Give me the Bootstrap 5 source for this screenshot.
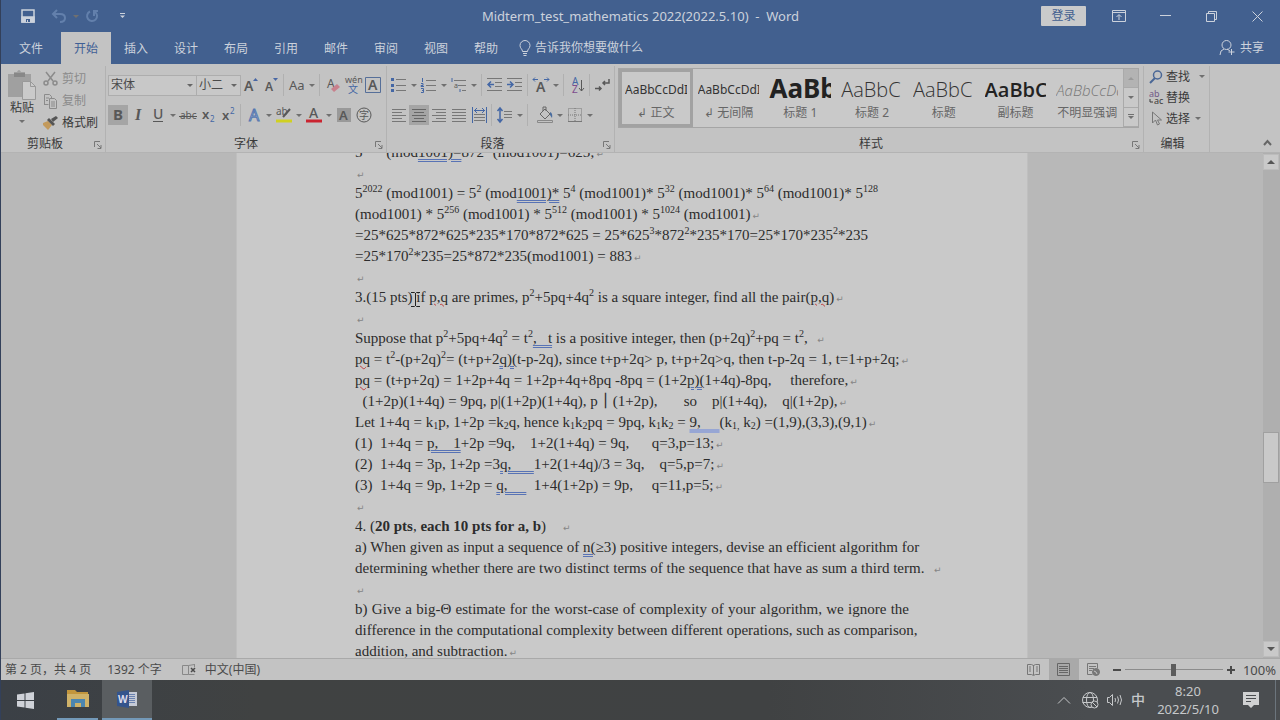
<!DOCTYPE html>
<html lang="zh-CN">
<head>
<meta charset="utf-8">
<meta name="viewport" content="width=device-width, initial-scale=1">
<title>Midterm_test_mathematics 2022(2022.5.10) - Word</title>
<link href="https://cdn.jsdelivr.net/npm/bootstrap@5.3.0/dist/css/bootstrap.min.css" rel="stylesheet">
<script src="https://cdn.jsdelivr.net/npm/bootstrap@5.3.0/dist/js/bootstrap.bundle.min.js"></script>
<style>
:root{--blue:#42608f;--ribbon:#c3c3c3;--ink:#3a3a3a;--line:#adadad}
body{font:12px/16px "Noto Sans","Noto Sans CJK SC",sans-serif;color:var(--ink);background:var(--ribbon);overflow:hidden}
svg{display:block;flex:none;fill:none;overflow:visible}
svg:not([stroke]){stroke:currentColor}
svg text{fill:currentColor;stroke:none}
button{border:0;background:none;color:inherit;padding:0;font:inherit;flex:none}
.app{border-left:1px solid #33405a}
/* title and tabs */
.titlebar{background:var(--blue);color:#ccd2dc;height:32px}
.doc-title{font-size:13px}
.qat{padding-left:20px}
.faded{color:#6380ac}
.winbtn{width:46px;height:32px;display:grid;place-items:center}
.login{background:#c9cacb;color:#42608f;width:45px;height:20px;border-radius:1px;margin-right:10px}
.tabs{background:var(--blue);color:#ccd2dc;height:32px}
.tabs a{color:inherit;text-decoration:none;width:50px;line-height:33px;height:32px;text-align:center;flex:none}
.tabs a.file-tab{width:60px}
.tabs a.current{background:var(--ribbon);color:#3f5f95}
/* ribbon */
.ribbon{height:89px;border-bottom:1px solid #b3b3b3;background:var(--ribbon)}
.group{border-right:1px solid #b2b2b2;height:86px;margin-top:2px;flex:none;display:flex;flex-direction:column;position:relative}
.g-clip{width:105px}.g-font{width:281px}.g-para{width:228px}.g-edit{width:66px}
.g-style{flex:1 1 0;min-width:0}
.group-name{margin-top:auto;text-align:center;line-height:16px}
.launch{position:absolute;right:3px;bottom:3px}
.tools{padding:4px 0 0 2px;height:34px;display:flex;align-items:center}
.tools + .tools{padding-top:0;height:30px}
.ib{width:20px;height:20px;display:grid;place-items:center;color:#585858}
.ib.on{background:#a5a5a5}
.ar{width:10px;height:20px;display:grid;place-items:center}
.ar::before,.arrow::before{content:"";display:block;border:3px solid transparent;border-top-color:#707070;border-bottom:0}
.vs{width:1px;height:22px;background:#b0b0b0;margin:0 3px 0 2px;flex:none}
.combo{height:21px;border:1px solid #adadad;border-radius:0;padding:0 2px;font:12px/18px "Noto Sans","Noto Sans CJK SC",sans-serif;color:#4a4a4a;background:#c8c8c8 url("data:image/svg+xml,%3Csvg xmlns='http://www.w3.org/2000/svg' width='6' height='3'%3E%3Cpath d='M0 0h6L3 3z' fill='%23666'/%3E%3C/svg%3E") no-repeat right 3px center;appearance:none}
.combo.face{width:89px}.combo.size{width:45px;margin-left:-1px}
.dim{color:#8b8b8b}
.paste{width:42px;padding-top:4px;display:flex;flex-direction:column;align-items:center}
.clip-list{padding-top:2px}
.clip-list button{display:flex;align-items:center;gap:4px;height:22px}
.gallery{border:1px solid #a5a5a5;background:#c9c9c9;height:60px;margin:2px 4px 0 3px;display:flex;overflow:hidden}
.stylecard{flex:1 1 0;min-width:0;padding:0 5px;text-align:center;color:#666;display:flex;flex-direction:column;white-space:nowrap}
.stylecard.on{border:3px solid #a2a2a2;padding:0 3px}
.stylecard.on .sample{height:33px;padding-top:2px}
.sample{display:flex;align-items:center;height:36px;overflow:hidden;color:#333;padding-top:6px}
.nm{line-height:16px}
.s-sm{font-size:12px}.s-lg{font-size:20px;padding-top:5px;font-weight:300;font-family:"Open Sans","Noto Sans",sans-serif}
.s-h1{font-size:26px;font-weight:700;padding-top:2px;color:#222}
.s-sub{font-weight:600;color:#222}
.s-it{font-size:15px;font-style:italic;color:#777}
.gal-nav{width:15px;flex:none;display:flex;flex-direction:column}
.gal-nav button{flex:1;border-left:1px solid #aaa;border-bottom:1px solid #aaa;display:grid;place-items:center;color:#707070}
.gal-nav button:first-child{background:#b3b3b3}
.edit-list{padding-left:5px}
.edit-list button{display:flex;align-items:center;height:21px;gap:3px}
.fold{width:70px;color:#666}
/* document */
.canvas{background:#b8b8b8;min-height:0;overflow:hidden}
.page{width:792px;background:#c9c9c9;border:solid #bfbfbf;border-width:0 1px;padding:0 118px;margin-top:-11px;min-height:540px;font:15px/21px "Liberation Serif",serif;color:#2c2c2c}
.page p{margin:0;height:21px;white-space:pre}
.page p.blank{height:20px}
.page p.full{white-space:nowrap;text-align:justify;text-align-last:justify}
.page sup,.page sub{font-size:10px;line-height:0;vertical-align:baseline;position:relative}
.page sup{top:-6px}
.page sub{bottom:-2px}
.pm::after{content:"↵";font:9px/9px "DejaVu Sans",sans-serif;color:#858585;margin-left:2px}
.gr{text-decoration:underline double #5873b5 1px;text-underline-offset:2px}
.gr.solid{text-decoration:underline solid #97a6d4 4px}
.sp{text-decoration:underline wavy #c04040 1px;text-underline-offset:1px}
.caret-pos{position:relative}
.caret-pos svg{position:absolute;left:-3px;top:2px}
.scroll{width:17px;background:#afafaf;flex:none;padding:1px 1px 1px 0}
.scroll button{width:16px;height:16px;background:#c9c9c9;border:1px solid #bcbcbc;display:grid;place-items:center}
.thumb{background:#c9c9c9;border:1px solid #a0a0a0;height:51px;flex:none}
.before{flex:262}.after{flex:158}
/* status and task bars */
.status{height:22px;border-top:1px solid #a9a9a9;background:#c3c3c3;color:#4a4a4a}
.vw{width:30px;height:21px;display:grid;place-items:center}
.vw.on{background:#a9a9a9}
.zoomer{width:98px;height:12px;appearance:none;background:linear-gradient(#8c8c8c,#8c8c8c) center/100% 1px no-repeat;margin:0 4px}
.zoomer::-webkit-slider-thumb{appearance:none;width:5px;height:12px;background:#5c5c5c}
.zoomer::-moz-range-thumb{width:5px;height:12px;border:0;border-radius:0;background:#5c5c5c}
.percent{font-size:13px}
.taskbar{height:40px;background:linear-gradient(90deg,#3b4046 0,#404242 20%,#404243 60%,#4a4d50 85%);color:#c6c8ca}
.tb{height:40px;display:grid;place-items:center}
.tb.home{width:48px}.tb.files{width:41px}.tb.word{width:50px}
.tb.run{border-bottom:2px solid #7399b8}
.tb.word{background:#5a5e61}
.ime{font-size:14px;font-weight:500}
.clock{width:78px;font-size:13px;line-height:18px;text-align:center}
.edge{height:40px}
</style>
</head>
<body>
<div class="app d-flex flex-column vh-100">
<header>
 <div class="titlebar d-flex align-items-center">
  <div class="qat d-flex align-items-center flex-fill w-25">
   <button aria-label="保存"><svg width="14" height="14" stroke-width="1.5"><path d="M1 1h12v12H1z"/><path d="M1 8h12v5H1z" fill="currentColor"/><path d="M5 10h4v3H5z" fill="#42608f" stroke="none"/><path d="M6 11h1v2H6z" fill="currentColor" stroke="none"/></svg></button>
   <button class="faded ms-3" aria-label="撤消"><svg width="16" height="14" stroke-width="2"><path d="M6 1 2 5l4 4M2 5h7q5 0 5 4t-5 4"/></svg></button>
   <span class="ar faded ms-1"></span>
   <button class="faded ms-1" aria-label="重复"><svg width="14" height="14" stroke-width="2"><path d="M5 2.500A5 5 0 1 0 10 3M9 7V2h4"/></svg></button>
   <button class="ms-3 ps-1" aria-label="自定义"><svg width="7" height="8"><path d="M1 1.500h5"/><path d="M1 3.500h5L3.500 6z" fill="currentColor" stroke="none"/></svg></button>
  </div>
  <div class="doc-title text-nowrap">Midterm_test_mathematics 2022(2022.5.10)&nbsp; -&nbsp; Word</div>
  <div class="d-flex align-items-center justify-content-end flex-fill w-25">
   <button class="login">登录</button>
   <button class="winbtn" aria-label="功能区显示选项"><svg width="14" height="12"><path d="M.5.500h13v11H.5zM.5 2.500h13M7 10V5M4.500 7 7 4.500 9.500 7"/></svg></button>
   <button class="winbtn" aria-label="最小化"><svg width="11" height="2"><path d="M0 .5h11"/></svg></button>
   <button class="winbtn" aria-label="还原"><svg width="11" height="11"><path d="M.5 2.500h8v8h-8zM2.500 2V.500h8v8H9"/></svg></button>
   <button class="winbtn" aria-label="关闭"><svg width="11" height="11"><path d="M.5.500l10 10M10.500.500l-10 10"/></svg></button>
  </div>
 </div>
 <nav class="tabs d-flex">
  <a href="#" class="file-tab">文件</a><a href="#" class="current">开始</a><a href="#">插入</a><a href="#">设计</a><a href="#">布局</a><a href="#">引用</a><a href="#">邮件</a><a href="#">审阅</a><a href="#">视图</a><a href="#">帮助</a>
  <button class="d-flex align-items-center gap-1 ms-2"><svg width="12" height="16"><path d="M3.500 11.500C3.500 9 1 8.500 1 5.500a5 5 0 0 1 10 0C11 8.500 8.500 9 8.500 11.500zM4 13.500h4M4.500 15.500h3"/></svg>告诉我你想要做什么</button>
  <button class="d-flex align-items-center gap-1 ms-auto me-3"><svg width="17" height="16"><circle cx="7.500" cy="5" r="4.500"/><path d="M1 15q0-5 4-6M8 9l3 2M12.500 9v6M9.500 12h6"/></svg>共享</button>
 </nav>
</header>

<section class="ribbon d-flex flex-shrink-0">
 <div class="group g-clip">
  <div class="d-flex">
   <button class="paste"><svg width="28" height="30" stroke="none"><path d="M0 4h6V2h3q2-4 4 0h4v2h6v8h-7v15H0z" fill="#a0a0a0"/><path d="M6 3h11v4H6z" fill="#888"/><path d="M14.500 11.500h8l5 5v13h-13z" fill="#cacaca" stroke="#999"/><path d="M22.500 11.500v5h5" stroke="#999"/></svg><span>粘贴</span><span class="arrow mt-1"></span></button>
   <div class="clip-list">
    <button class="dim"><svg width="15" height="14" stroke-width="1.500"><path d="M3 0l7 9M12 0L5 9"/><circle cx="3" cy="11" r="2"/><circle cx="12" cy="11" r="2"/></svg>剪切</button>
    <button class="dim"><svg width="15" height="15"><path d="M1.500 11V.500h5l2 2V4M6.500 4.500h5l2 2v8h-7zM1.500 10.500h4M3 4h3M3 6.500h2M8 8h4M8 10h4M8 12h4"/></svg>复制</button>
    <button><svg width="15" height="14" stroke="none"><path d="M0 7l5-2 4 4-4 5-5-5z" fill="#c39a5c"/><path d="M4 4l2-2 6 6-2 2z" fill="#555"/><path d="M8 3l5-3 2 2-5 4z" fill="#555"/></svg>格式刷</button>
   </div>
  </div>
  <div class="group-name me-3">剪贴板</div><svg class="launch" width="8" height="8" stroke="#777"><use href="#la"/></svg>
 </div>

 <div class="group g-font">
  <div class="tools">
   <select class="combo face" aria-label="字体"><option>宋体</option></select><select class="combo size" aria-label="字号"><option>小二</option></select>
   <button class="ib" aria-label="增大字号"><svg width="18" height="18"><text x="2" y="15" font-size="14" font-weight="600">A</text><path d="M11 5l2.500-3L16 5z" fill="#4867a5" stroke="none"/></svg></button>
   <button class="ib" aria-label="减小字号"><svg width="18" height="18"><text x="3" y="15" font-size="12" font-weight="600">A</text><path d="M11 2l2.500 3L16 2z" fill="#4867a5" stroke="none"/></svg></button>
   <span class="vs"></span><button class="ib" aria-label="更改大小写"><svg width="18" height="18"><text x="1" y="14" font-size="13">Aa</text></svg></button><span class="ar"></span><span class="vs"></span>
   <button class="ib" aria-label="清除格式"><svg width="18" height="18"><text x="3" y="12" font-size="12">A</text><path d="M7 13l6-5 3 3-6 5z" fill="#c8818d" stroke="none"/></svg></button>
   <button class="ib" aria-label="拼音指南"><svg width="18" height="20"><text x="1" y="8" font-size="9">wén</text><text x="4" y="18" font-size="10" style="fill:#4467a5">文</text></svg></button>
   <button class="ib" aria-label="字符边框"><svg width="17" height="17"><path d="M.5.500h15v15H.5z" stroke="#566f99"/><text x="3" y="13" font-size="14" font-weight="600">A</text></svg></button>
  </div>
  <div class="tools">
   <button class="ib on" aria-label="加粗"><svg width="18" height="18"><text x="4" y="14" font-size="15" font-weight="700">B</text></svg></button>
   <button class="ib" aria-label="倾斜"><svg width="18" height="18"><text x="6" y="14" font-size="16" font-style="italic" font-weight="600" font-family="Liberation Serif">I</text></svg></button>
   <button class="ib" aria-label="下划线"><svg width="18" height="18"><text x="4" y="13" font-size="14" font-weight="500">U</text><path d="M4 15.500h10"/></svg></button><span class="ar"></span>
   <button class="ib" aria-label="删除线"><svg width="18" height="18"><text x="1" y="13" font-size="10">abc</text><path d="M0 10.500h18"/></svg></button>
   <button class="ib" aria-label="下标"><svg width="18" height="18"><text x="3" y="13" font-size="13" font-weight="600">x</text><text x="11" y="16" font-size="8" style="fill:#4467a5">2</text></svg></button>
   <button class="ib" aria-label="上标"><svg width="18" height="18"><text x="3" y="14" font-size="13" font-weight="600">x</text><text x="11" y="8" font-size="8" style="fill:#4467a5">2</text></svg></button>
   <span class="vs"></span>
   <button class="ib" aria-label="文本效果"><svg width="18" height="18"><text x="4" y="15" font-size="16" style="stroke:#5577b0;fill:#c3cfe0">A</text></svg></button><span class="ar"></span>
   <button class="ib" aria-label="突出显示"><svg width="18" height="18"><text x="1" y="9" font-size="10">ab</text><path d="M8 11l7-8" stroke-width="2"/><path d="M1 13.500h16v3H1z" fill="#d0d022" stroke="none"/></svg></button><span class="ar"></span>
   <button class="ib" aria-label="字体颜色"><svg width="18" height="18"><text x="4" y="12" font-size="14" font-weight="500">A</text><path d="M1 13.500h16v3H1z" fill="#ca2430" stroke="none"/></svg></button><span class="ar"></span>
   <button class="ib" aria-label="字符底纹"><svg width="16" height="16"><path d="M1 1h14v14H1z" fill="#999" stroke="none"/><text x="3" y="13" font-size="13" font-weight="600">A</text></svg></button>
   <button class="ib" aria-label="带圈字符"><svg width="16" height="16"><circle cx="8" cy="8" r="7"/><text x="3" y="12" font-size="10">字</text></svg></button>
  </div>
  <div class="group-name">字体</div><svg class="launch" width="8" height="8" stroke="#777"><use href="#la"/></svg>
 </div>

 <div class="group g-para">
  <div class="tools">
   <button class="ib" aria-label="项目符号"><svg width="16" height="14"><path d="M5 1.500h10M5 7.500h10M5 12.500h10" stroke="#777"/><path d="M0 0h3v3H0zM0 6h3v3H0zM0 11h3v3H0z" fill="#4467a5" stroke="none"/></svg></button><span class="ar"></span>
   <button class="ib" aria-label="编号"><svg width="16" height="16"><path d="M5 3.500h10M5 8.500h10M5 13.500h10" stroke="#777"/><path d="M1.500 1v4M0 6.500h2v2H0v1h3M0 11.500h2.500v4H0M1 13.500h1" stroke="#4467a5"/></svg></button><span class="ar"></span>
   <button class="ib" aria-label="多级列表"><svg width="16" height="16"><path d="M3 3.500h12M7 8.500h8M11 13.500h4" stroke="#777"/><path d="M1 1v4M9 12v3" stroke="#4467a5"/><text x="3" y="11" font-size="7">a</text></svg></button><span class="ar"></span><span class="vs"></span>
   <button class="ib" aria-label="减少缩进"><svg width="16" height="14"><path d="M0 .5h15M8 4.500h7M8 8.500h7M0 12.500h15" stroke="#777"/><path d="M7 6.500H1M4 3.500l-3 3 3 3" stroke="#4467a5" stroke-width="1.500"/></svg></button>
   <button class="ib" aria-label="增加缩进"><svg width="16" height="14"><path d="M0 .5h15M8 4.500h7M8 8.500h7M0 12.500h15" stroke="#777"/><path d="M0 6.500h6M3 3.500l3 3-3 3" stroke="#4467a5" stroke-width="1.500"/></svg></button><span class="vs"></span>
   <button class="ib" aria-label="中文版式"><svg width="18" height="18"><text x="4" y="16" font-size="14" font-weight="600">A</text><path d="M6 3.500H1m2-2-2 2 2 2M12 3.500h5m-2-2 2 2-2 2" stroke="#4467a5"/></svg></button><span class="ar"></span><span class="vs"></span>
   <button class="ib" aria-label="排序"><svg width="16" height="18"><text x="3" y="9" font-size="10" style="fill:#4467a5">A</text><text x="3" y="17" font-size="10" style="fill:#7d4b8d">Z</text><path d="M12.500 4v11m-2.500-3 2.500 3 2.500-3"/></svg></button><span class="vs"></span>
   <button class="ib" aria-label="显示编辑标记"><svg width="16" height="14"><path d="M14 1v4H8m2-2-2 2 2 2M0 10.500h6m-2-2 2 2-2 2" stroke-width="1.500"/></svg></button>
  </div>
  <div class="tools">
   <button class="ib" aria-label="左对齐"><svg width="14" height="15" stroke="#777"><path d="M0 1.500h14M0 4.500h10M0 7.500h14M0 10.500h10M0 13.500h14"/></svg></button>
   <button class="ib on" aria-label="居中"><svg width="14" height="15" stroke="#666"><path d="M0 1.500h14M2 4.500h10M0 7.500h14M2 10.500h10M0 13.500h14"/></svg></button>
   <button class="ib" aria-label="右对齐"><svg width="14" height="15" stroke="#777"><path d="M0 1.500h14M4 4.500h10M0 7.500h14M4 10.500h10M0 13.500h14"/></svg></button>
   <button class="ib" aria-label="两端对齐"><svg width="14" height="15" stroke="#777"><path d="M0 1.500h14M0 4.500h14M0 7.500h14M0 10.500h14M0 13.500h14"/></svg></button>
   <button class="ib" aria-label="分散对齐"><svg width="15" height="16" stroke="#777"><path d="M2 7.500h11M2 10.500h11M2 13.500h11"/><path d="M.5 0v16M14.500 0v16M2 3.500h11M5 1 2.500 3.500 5 6M10 1l2.500 2.500L10 6" stroke="#4467a5"/></svg></button><span class="vs"></span>
   <button class="ib" aria-label="行距"><svg width="16" height="16"><path d="M7 4.500h8M7 7.500h8M7 10.500h8" stroke="#777"/><path d="M3 1v14M.5 4 3 1l2.500 3M.5 12 3 15l2.500-3" stroke="#4467a5" stroke-width="1.500"/></svg></button><span class="ar"></span><span class="vs"></span>
   <button class="ib ms-1" aria-label="底纹"><svg width="18" height="18"><path d="M4 8l5-5 5 5-5 5zM7 5V1h3v4" stroke="#666"/><path d="M14 6q3 1 2 6l-2-3z" fill="#4a6d9f" stroke="none"/><path d="M1.500 14.500h15v2h-15z" stroke="#888"/></svg></button><span class="ar"></span>
   <button class="ib" aria-label="边框"><svg width="15" height="15" stroke="#777"><path d="M.5.500h13v13H.5zM7 0v14M0 7h14" stroke-dasharray="1 1"/><path d="M0 13.500h14"/></svg></button><span class="ar"></span>
  </div>
  <div class="group-name pe-3">段落</div><svg class="launch" width="8" height="8" stroke="#777"><use href="#la"/></svg>
 </div>

 <div class="group g-style">
  <div class="gallery">
   <button class="stylecard on"><span class="sample s-sm">AaBbCcDdI</span><span class="nm">↲ 正文</span></button>
   <button class="stylecard"><span class="sample s-sm">AaBbCcDdI</span><span class="nm">↲ 无间隔</span></button>
   <button class="stylecard"><span class="sample s-h1">AaBb</span><span class="nm">标题 1</span></button>
   <button class="stylecard"><span class="sample s-lg">AaBbC</span><span class="nm">标题 2</span></button>
   <button class="stylecard"><span class="sample s-lg">AaBbC</span><span class="nm">标题</span></button>
   <button class="stylecard"><span class="sample s-lg s-sub">AaBbC</span><span class="nm">副标题</span></button>
   <button class="stylecard"><span class="sample s-lg s-it">AaBbCcDd</span><span class="nm">不明显强调</span></button>
   <div class="gal-nav"><button aria-label="上一行"><svg width="6" height="3"><path d="M0 3h6L3 0z" fill="#999" stroke="none"/></svg></button><button aria-label="下一行"><span class="arrow"></span></button><button aria-label="其他"><svg width="6" height="7"><path d="M0 1.500h6"/><path d="M0 3h6L3 6z" fill="currentColor" stroke="none"/></svg></button></div>
  </div>
  <div class="group-name pe-3">样式</div><svg class="launch" width="8" height="8" stroke="#777"><use href="#la"/></svg>
 </div>

 <div class="group g-edit">
  <div class="edit-list">
   <button><svg width="14" height="14" stroke="#4a6796" stroke-width="1.500"><circle cx="8.500" cy="5" r="4"/><path d="M6 8l-5 5" stroke-width="2"/></svg>查找<span class="ar ms-1"></span></button>
   <button><svg width="14" height="15"><text x="0" y="7" font-size="9" style="fill:#725a88">ab</text><text x="5" y="14" font-size="9">ac</text><path d="M1 9v3h3"/></svg>替换</button>
   <button><svg width="14" height="15"><path d="M3.500 1v11l3-3 2 5 2-1-2-4h4z" stroke="#777"/></svg>选择<span class="ar"></span></button>
  </div>
  <div class="group-name pe-2">编辑</div>
 </div>
 <div class="fold d-flex align-items-end justify-content-end flex-shrink-0 pe-2 pb-1"><button aria-label="折叠功能区"><svg width="9" height="9" stroke-width="2"><path d="M1 6l3.500-4L8 6"/></svg></button></div>
</section>

<main class="canvas d-flex flex-fill">
 <div class="flex-fill d-flex justify-content-center overflow-hidden">
 <article class="page flex-shrink-0">
<p>5<sup>1024</sup> (mod<span class="gr">1001)=</span>872<sup>2</sup> (mod1001)=625;<span class="pm"></span></p>
<p class="blank"><span class="pm"></span></p>
<p>5<sup>2022</sup> (mod1001) = 5<sup>2</sup> (mod<span class="gr">1001)*</span> 5<sup>4</sup> (mod1001)* 5<sup>32</sup> (mod1001)* 5<sup>64</sup> (mod1001)* 5<sup>128</sup></p>
<p>(mod1001) * 5<sup>256</sup> (mod1001) * 5<sup>512</sup> (mod1001) * 5<sup>1024</sup> (mod1001)<span class="pm"></span></p>
<p>=25*625*872*625*235*170*872*625 = 25*625<sup>3</sup>*872<sup>2</sup>*235*170=25*170*235<sup>2</sup>*235</p>
<p>=25*170<sup>2</sup>*235=25*872*235(mod1001) = 883<span class="pm"></span></p>
<p class="blank"><span class="pm"></span></p>
<p>3.(15 pts)<span class="caret-pos"><svg width="12" height="17" stroke="#222"><path d="M1 1.500h3.500l1 1 1-1H10M5.500 2v13M1 15.500h3.500l1-1 1 1H10"/></svg></span> if <span class="sp">p,q</span> are primes, p<sup>2</sup>+5pq+4q<sup>2</sup> is a square integer, find all the pair(<span class="sp">p,q</span>)<span class="pm"></span></p>
<p class="blank"><span class="pm"></span></p>
<p>Suppose that p<sup>2</sup>+5pq+4q<sup>2</sup> = t<sup>2</sup><span class="gr">,   t</span> is a positive integer, then (p+2q)<sup>2</sup>+pq = t<sup>2</sup>,  <span class="pm"></span></p>
<p><span class="sp">pq</span> = t<sup>2</sup>-(p+2q)<sup>2</sup>= (t+p+2<span class="gr">q)(</span>t-p-2q), since t+p+2q&gt; p, t+p+2q&gt;q, then t-p-2q = 1, t=1+p+2q;<span class="pm"></span></p>
<p><span class="sp">pq</span> = (t+p+2q) = 1+2p+4q = 1+2p+4q+8pq -8pq = (1+2<span class="gr">p)(</span>1+4q)-8pq,  &nbsp;  therefore,<span class="pm"></span></p>
<p>  (1+2p)(1+4q) = 9pq, p|(1+2p)(1+4q), p<b>｜</b>(1+2p),       so    p|(1+4q),    q|(1+2p),<span class="pm"></span></p>
<p>Let 1+4q = k<sub>1</sub>p, 1+2p =k<sub>2</sub>q, hence k<sub>1</sub>k<sub>2</sub>pq = 9pq, k<sub>1</sub>k<sub>2</sub> = <span class="gr solid">9,     </span>(k<sub>1,</sub> k<sub>2</sub>) =(1,9),(3,3),(9,1)<span class="pm"></span></p>
<p>(1)  1+4q = <span class="gr">p,    1</span>+2p =9q,    1+2(1+4q) = 9q,      q=3,p=13;<span class="pm"></span></p>
<p>(2)  1+4q = 3p, 1+2p =3<span class="gr">q,      </span>1+2(1+4q)/3 = 3q,    q=5,p=7;<span class="pm"></span></p>
<p>(3)  1+4q = 9p, 1+2p = <span class="gr">q,     </span>  1+4(1+2p) = 9p,     q=11,p=5;<span class="pm"></span></p>
<p class="blank"><span class="pm"></span></p>
<p>4. (<b>20 pts</b>, <b>each 10 pts for a, b</b>)    <span class="pm"></span></p>
<p class="full">a) When given as input a sequence of <span class="gr">n(</span>≥3) positive integers, devise an efficient algorithm for</p>
<p>determining whether there are two distinct terms of the sequence that have as sum a third term.  <span class="pm"></span></p>
<p class="blank"><span class="pm"></span></p>
<p class="full">b) Give a big-Θ estimate for the worst-case of complexity of your algorithm, we ignore the</p>
<p class="full">difference in the computational complexity between different operations, such as comparison,</p>
<p>addition, and subtraction.<span class="pm"></span></p>
 </article>
 </div>
 <div class="scroll d-flex flex-column">
  <button aria-label="向上滚动"><svg width="8" height="4"><path d="M0 4h8L4 0z" fill="#555" stroke="none"/></svg></button>
  <div class="before"></div><div class="thumb"></div><div class="after"></div>
  <button aria-label="向下滚动"><svg width="8" height="4"><path d="M0 0h8L4 4z" fill="#555" stroke="none"/></svg></button>
 </div>
</main>

<footer>
 <div class="status d-flex align-items-center">
  <span class="ms-1">第 2 页，共 4 页</span><span class="ms-3">1392 个字</span>
  <button class="ms-3 ps-1" aria-label="校对"><svg width="15" height="12"><path d="M.5 1.500h6v9h-6zM6.500 1.500l6-1M6.500 10.500h6M12.500 0v3" stroke="#888"/><path d="M9 4l4 4M13 4 9 8" stroke-width="1.500"/></svg></button><span class="ms-2">中文(中国)</span>
  <div class="d-flex align-items-center ms-auto">
   <button class="vw" aria-label="阅读视图"><svg width="13" height="13" stroke="#777"><path d="M.5 1.500h4l2 1 2-1h4v10h-4l-2 1-2-1h-4zM6.500 2v10M2 4h2M2 6h2M2 8h2M9 4h2M9 6h2M9 8h2"/></svg></button>
   <button class="vw on" aria-label="页面视图"><svg width="13" height="13" stroke="#666"><path d="M.5.500h12v12H.5zM2 3.500h9M2 5.500h9M2 7.500h9M2 9.500h9"/></svg></button>
   <button class="vw" aria-label="Web 视图"><svg width="13" height="13" stroke="#777"><path d="M.5.500h10v5M.5.500v11h5M2 3.500h7M2 5.500h5M2 7.500h3"/><circle cx="9" cy="9" r="3.500" fill="#777"/><path d="M7 8l2 1 1 2" stroke="#c3c3c3"/></svg></button>
   <button class="ms-1" aria-label="缩小"><svg width="8" height="8" stroke-width="2"><path d="M0 4h8"/></svg></button>
   <input type="range" class="zoomer" aria-label="显示比例" min="0" max="100" value="50">
   <button aria-label="放大"><svg width="8" height="8" stroke-width="2"><path d="M0 4h8M4 0v8"/></svg></button>
   <span class="percent ms-2 me-1">100%</span>
  </div>
 </div>
 <div class="taskbar d-flex">
  <button class="tb home" aria-label="开始"><svg width="17" height="17" stroke="none"><path d="M0 2.500 7.500 1.500V8H0zM8.500 1.300 17 0v8H8.500zM0 9h7.500v6.500L0 14.500zM8.500 9H17v8l-8.500-1.200z" fill="#cfd2d8"/></svg></button>
  <button class="tb run files ms-2" aria-label="文件资源管理器"><svg width="22" height="18" stroke="none"><path d="M0 0h8l2 2h11v15H0z" fill="#c2963d"/><path d="M0 4h22v13H0z" fill="#cfb269"/><path d="M4 9h14v8h-4v-4H8v4H4z" fill="#4c86b0"/></svg></button>
  <button class="tb run word ms-1" aria-label="Word"><svg width="20" height="18" stroke="none"><path d="M9 2h11v14H9z" fill="#c5cad6"/><path d="M11 4.500h7M11 6.500h7M11 8.500h7M11 10.500h7M11 12.500h7" stroke="#6a82b0"/><path d="M0 2l12-2v18L0 16z" fill="#34548c"/><text x="1" y="13" font-size="10" font-weight="700" style="fill:#dde">W</text></svg></button>
  <div class="d-flex align-items-center ms-auto">
   <button aria-label="显示隐藏的图标"><svg width="12" height="7"><path d="M0 6.500 6 .5l6 6"/></svg></button>
   <button class="ms-2 ps-1" aria-label="网络"><svg width="17" height="17"><circle cx="8" cy="8" r="7.500"/><ellipse cx="8" cy="8" rx="3.500" ry="7.500"/><path d="M1 5.500h14M.5 10.500h9"/><circle cx="12.500" cy="12.500" r="3.500" fill="#4a4d50"/><path d="M10 10l5 5"/></svg></button>
   <button class="ms-2" aria-label="音量"><svg width="16" height="14"><path d="M.5 4.500h2l3-3v11l-3-3h-2zM8 5q1 2 0 4M10.500 3.500q2 3.500 0 7M13 2q3 5 0 10"/></svg></button>
   <button class="ime ms-2">中</button>
   <button class="clock ms-1 px-1">8:20<br>2022/5/10</button>
   <button class="ms-3" aria-label="通知"><svg width="16" height="16" stroke="none"><path d="M0 0h16v13h-5l-3 3-3-3H0z" fill="#d0d1d2"/><path d="M3 3.500h10M3 6.500h10M3 9.500h5" stroke="#4a4d50"/></svg></button>
   <span class="edge border-start border-secondary ms-3 me-1"></span>
  </div>
 </div>
</footer>
</div>
<svg width="0" height="0" stroke="#777" class="position-absolute"><defs><g id="la"><path d="M.5 6V.500H6M3 3l4 4M7 4v3.500H3.500"/></g></defs></svg>
</body>
</html>
